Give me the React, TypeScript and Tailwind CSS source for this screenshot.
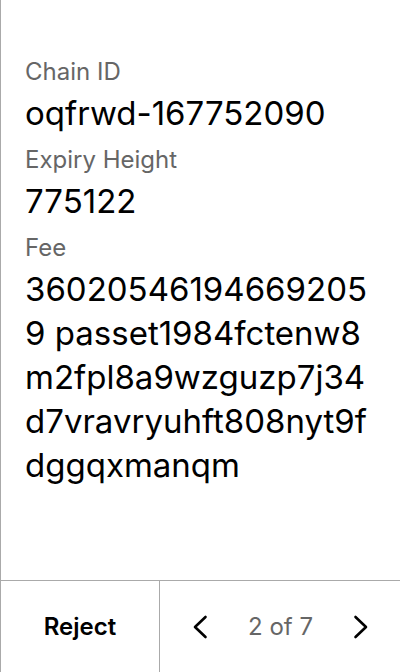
const fields = [
  { label: "Chain ID", value: "oqfrwd-167752090" },
  { label: "Expiry Height", value: "775122" },
  {
    label: "Fee",
    value: "360205461946692059 passet1984fctenw8m2fpl8a9wzguzp7j34d7vravryuhft808nyt9fdggqxmanqm",
  },
];

function Chevron({ dir }: { dir: "left" | "right" }) {
  return (
    <svg width="16" height="24" viewBox="0 0 16 24" fill="none" stroke="#000" strokeWidth="2.6" strokeLinecap="round" strokeLinejoin="round">
      {dir === "left" ? <path d="M13.5 2 3 12l10.5 10" /> : <path d="M2.5 2 13 12 2.5 22" />}
    </svg>
  );
}

export default function App() {
  return (
    <div className="flex h-[672px] w-[400px] flex-col border-l border-[#aaa] bg-white font-['Inter',sans-serif] text-black">
      <div className="flex-1 pl-6 pr-[25px] pt-[53px]">
        {fields.map((f) => (
          <div key={f.label}>
            <div className="text-[24px] leading-[38px] text-[#666]">{f.label}</div>
            <div className="mb-[6px] break-all text-[33px] leading-[44px]">{f.value}</div>
          </div>
        ))}
      </div>
      <div className="flex h-[92px] border-t border-[#aaa]">
        <button className="w-[159px] border-r border-[#aaa] text-[24px] font-semibold">Reject</button>
        <div className="flex flex-1 items-center justify-between pl-[32px] pr-[31px]">
          <Chevron dir="left" />
          <span className="text-[24px] text-[#666]">2 of 7</span>
          <Chevron dir="right" />
        </div>
      </div>
    </div>
  );
}
